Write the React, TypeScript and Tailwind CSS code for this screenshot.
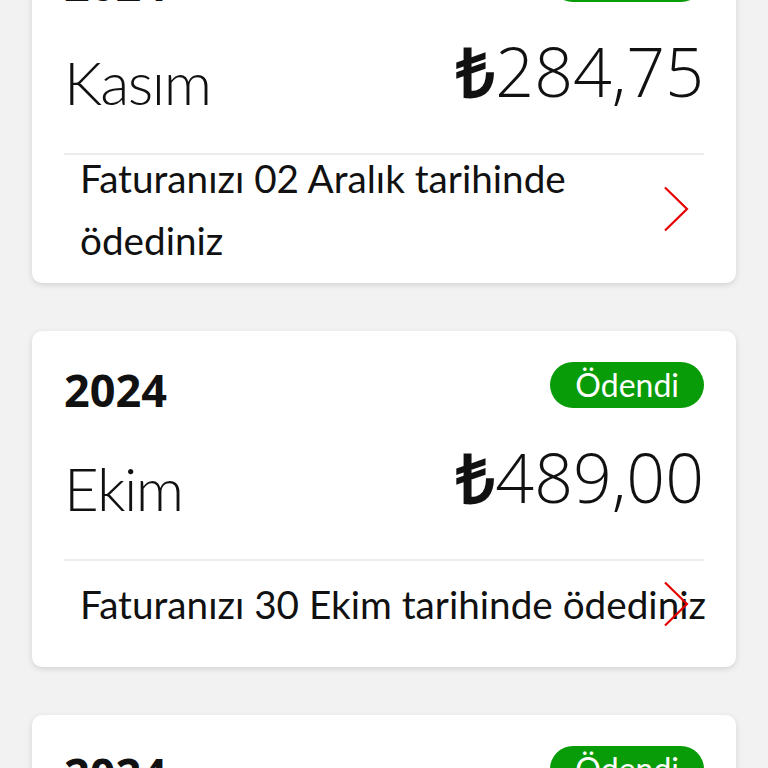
type Bill = {
  year: string;
  month: string;
  amount: string;
  lines: string[];
  rowHeight: string;
};

const bills: Bill[] = [
  {
    year: "2024",
    month: "Kasım",
    amount: "284,75",
    lines: ["Faturanızı 02 Aralık tarihinde", "ödediniz"],
    rowHeight: "h-[130px]",
  },
  {
    year: "2024",
    month: "Ekim",
    amount: "489,00",
    lines: ["Faturanızı 30 Ekim tarihinde ödediniz"],
    rowHeight: "h-[108px]",
  },
  {
    year: "2024",
    month: "Eylül",
    amount: "489,00",
    lines: ["Faturanızı 30 Eylül tarihinde ödediniz"],
    rowHeight: "h-[108px]",
  },
];

function Chevron() {
  return (
    <svg
      width="26"
      height="46"
      viewBox="0 0 26 46"
      fill="none"
      className="absolute right-[15px] top-1/2 -translate-y-1/2"
      aria-hidden="true"
    >
      <polyline
        points="2,1.5 24,23 2,44.5"
        stroke="#e60000"
        strokeWidth="2.2"
        strokeLinejoin="miter"
      />
    </svg>
  );
}

function BillCard({ bill }: { bill: Bill }) {
  return (
    <div className="rounded-[10px] bg-white px-8 pt-[31px] shadow-[0_2px_6px_rgba(0,0,0,0.13)]">
      <div className="flex items-end justify-between">
        <span className="-mb-[4px] font-bold text-[45px] leading-none">
          {bill.year}
        </span>
        <span className="flex h-[46px] items-center rounded-full bg-[#089c08] px-[25px] font-['Lato',sans-serif] text-[32px] leading-none text-white">
          Ödendi
        </span>
      </div>
      <div className="mt-[35px] mb-[41px] flex items-end justify-between">
        <span className="font-['Lato',sans-serif] text-[60px] font-light leading-none tracking-[-1.5px]">
          {bill.month}
        </span>
        <span className="mb-[7px] text-[68px] font-light leading-none">
          <span className="font-bold">₺</span>
          {bill.amount}
        </span>
      </div>
      <div className={`border-t-2 border-[#ececec] pb-[21px] ${bill.rowHeight}`}>
        <div className="relative flex h-full items-center pl-4">
          <p className="whitespace-nowrap font-['Lato',sans-serif] text-[38.7px] leading-[62px]">
            {bill.lines.map((l, i) => (
              <span key={i} className="block">
                {l}
              </span>
            ))}
          </p>
          <Chevron />
        </div>
      </div>
    </div>
  );
}

export default function App() {
  return (
    <div className="h-[768px] overflow-hidden bg-[#f2f2f2] font-['Open_Sans',sans-serif] text-[#111]">
      <div className="-mt-[75px] flex flex-col gap-12 px-8">
        {bills.map((b) => (
          <BillCard key={b.month} bill={b} />
        ))}
      </div>
    </div>
  );
}
